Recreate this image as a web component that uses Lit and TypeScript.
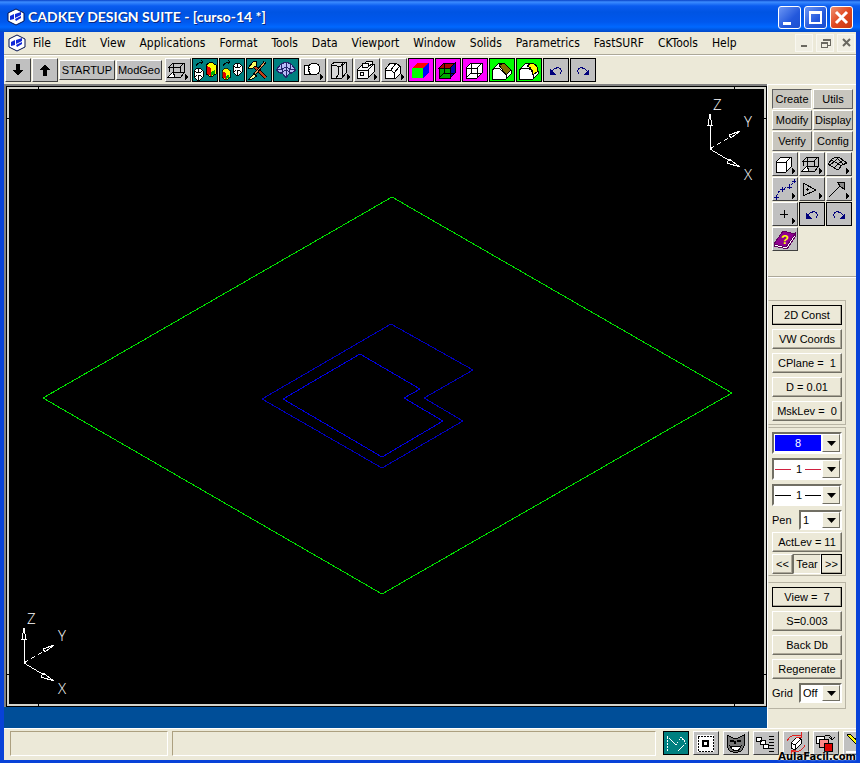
import { LitElement, html, svg, css, TemplateResult } from "lit";
import { customElement, property } from "lit/decorators.js";
import { classMap } from "lit/directives/class-map.js";

const more = svg`<path d="M21 16l3 3l-3 3z" fill="#000" stroke="none"/>`;
const undoArrow = svg`<g stroke="#00007c" fill="none"><path d="M10 13Q13 9 17 10Q21 12 18 16"/><path d="M8 11v6h6z" fill="#00007c" stroke="none"/></g>`;
const redoArrow = svg`<g stroke="#00007c" fill="none"><path d="M18 13Q15 9 11 10Q7 12 10 16"/><path d="M20 11v6h-6z" fill="#00007c" stroke="none"/></g>`;
const wheel = (x: number, y: number) => svg`<g transform="translate(${x} ${y})"><path d="M3 0h3l3 3v6l-3 3h-3l-3-3v-6z" fill="#fff"/><path d="M4 0v12M1 3l7 6M8 3l-7 6" stroke="#000"/><path d="M3 5h3v2h-3z" fill="#fff" stroke="none"/></g>`;
const colorBox = (x: number, y: number, k: number) => svg`<g transform="translate(${x} ${y}) scale(${k})"><path d="M0 3l5-3l5 3v9l-5 3l-5-3z" fill="#ff0" stroke="#000"/><path d="M1 4l4 2v8l-4-2z" fill="#e00000" stroke="none"/><path d="M5 6l4-2v4l-4 2z" fill="#ff0" stroke="none"/><path d="M5 10l4-2v4l-4 2z" fill="#00b000" stroke="none"/></g>`;
const outlineCube = svg`<path d="M5 10l5-5h10v10l-5 5h-10z" fill="#fff"/><path d="M5 10h10v10M15 10l5-5" fill="none"/>`;

const icons: Record<string, TemplateResult> = {
  down: svg`<path d="M12 6h4v6h3l-5 6l-5-6h3z" fill="#000" stroke="none"/>`,
  up: svg`<path d="M12 18h4v-6h3l-5-6l-5 6h3z" fill="#000" stroke="none"/>`,
  wire: svg`<path d="M5 9l4-4h11l-4 4zM5 9v5M9 5v9h11M16 9v5M20 5v10" fill="none"/><path d="M4 19l5-5l2 5z" fill="#fff"/><path d="M11 19h6l3-4" fill="none"/>${more}`,
  toBox: svg`${wheel(3, 10)}${colorBox(15, 4, 1)}<path d="M5 8q2-4 7-4M10 2l2 2l-2 2" fill="none"/>`,
  toWheel: svg`${colorBox(4, 10, 0.8)}${wheel(15, 5)}<path d="M5 8q2-4 7-4M10 2l2 2l-2 2" fill="none"/>`,
  tools: svg`<path d="M9 8l12 12" stroke="#000" stroke-width="4"/><path d="M9 8l12 12" stroke="#c04018" stroke-width="2"/><path d="M20 4l-11 13" stroke="#000" stroke-width="3"/><path d="M20 4l-11 13" stroke="#e0a060"/><path d="M3 10l6-7l3 1l-1 4l-5 3z" fill="#ffff60"/><path d="M4 21l5-5l3 2l-5 3z" fill="#ffffa0"/>`,
  mesh: svg`<path d="M4 12l5-6l5-2l5 2l5 6l-4 3l-3 1l-3 4l-3-4l-3-1z" fill="#b8b8f4" stroke="#24246c"/><path d="M14 4v16M9 6l2 10M19 6l-2 10M4 12l6-1l4-2l4 2l6 1M8 15l6-3l6 3" fill="none" stroke="#24246c"/>`,
  circle: svg`<path d="M5 7h12v9h-12z" fill="#fff"/><circle cx="15" cy="11" r="6" fill="#fff"/><path d="M10 7v9h7" fill="none" stroke-dasharray="1 1"/>${more}`,
  fold: svg`<path d="M5 7l4-3h11v11l-4 5h-11z" fill="#d8d8d8"/><path d="M5 7h5l2 2v8l-2 3M12 9q4 0 5-5M16 8v12M16 8l4-4" fill="none"/>${more}`,
  machine: svg`<path d="M4 12l5-5v-2h3l2-2h5v3h2v8l-6 6h-11z" fill="#f4f4f4"/><path d="M4 12h11v8M15 12l6-6M9 7v2h6l4-3M9 5h6v4" fill="none"/><circle cx="9" cy="16" r="2" fill="none"/>${more}`,
  chamfer: svg`<path d="M5 12l5-7h6l4 3v8l-4 4h-11z" fill="#fff"/><path d="M5 12h6l5-7M11 12l3 3v5M14 15l6-7" fill="none"/>${more}`,
  shaded: svg`<path d="M5 10l5-5h12l-6 5z" fill="#f00" stroke="none"/><path d="M5 10h11v10h-11z" fill="#0f0" stroke="none"/><path d="M16 10l6-5v10l-6 5z" fill="#00f" stroke="none"/>`,
  shadedWire: svg`<path d="M5 10l5-5h11l-5 5z" fill="#b00000"/><path d="M5 10h11v10h-11z" fill="#00a800"/><path d="M16 10l5-5v10l-5 5z" fill="#0000b0"/><path d="M10 5v10h11M10 15l-5 5" fill="none"/>`,
  whiteWire: svg`<path d="M5 10l5-5h11v10l-5 5h-11z" fill="#fff"/><path d="M5 10h11v10M16 10l5-5M10 5v10h11M10 15l-5 5" fill="none"/>`,
  chamferFace: svg`<path d="M4 12l7-7h5l7 7v4l-5 5h-14z" fill="#fff"/><path d="M11 7l5-2l7 7l-5 5z" fill="#807000"/><path d="M4 12l3-2h4l7 7v4" fill="none"/>`,
  filletFace: svg`<path d="M4 12l7-7h6q6 2 6 8v3l-5 5h-14z" fill="#fff"/><path d="M12 8l5-3q6 2 6 8l-5 4q0-7-6-9z" fill="#ff0"/><path d="M4 12l3-2h4q7 1 7 7v4" fill="none"/>`,
  undo: undoArrow,
  redo: redoArrow,
  cube: svg`${outlineCube}${more}`,
  surface: svg`<path d="M3 12l4-5l4-2h3l8 6l-5 2l-3 4h-3zM6 8l4 2l7 4M11 5l7 7M5 13l5-4l4-4M9 16l4-4l5-4" fill="none"/>${more}`,
  spline: svg`<g stroke="#000080" fill="none"><path d="M5 20Q8 13 11 12T18 10Q20 9 23 4" stroke-dasharray="3 1"/><path d="M3 20h5M5 18v5M9 12h5M11 10v5M16 10h5M18 7v5M21 4h4M23 2v4"/></g>${more}`,
  play: svg`<path d="M5 6v13l13-6z" fill="none"/><path d="M9 11v3M8 12h3"/>${more}`,
  leader: svg`<path d="M4 20l13-13M12 5h7v7z" fill="none"/><path d="M12 5h7v7l-3-2z" fill="#888"/>${more}`,
  plus: svg`<path d="M13 8v8M9 12h8" fill="none"/>${more}`,
  help: svg`<path d="M3 17l9-13l12 3l-9 13z" fill="#900090" stroke="#600060"/><path d="M3 17l12 3l9-13v3l-8 12l-13-3z" fill="#fff" stroke="#600060"/><text x="10" y="17" class="mark" fill="#ff0" stroke="none">?</text>`,
  polyline: svg`<path d="M5 20v-15l9 9l5-8l5 6l-8 8" fill="none" stroke="#fff" stroke-dasharray="2 1"/>`,
  select: svg`<path d="M6 5h15v15h-15z" fill="#fff" stroke="#fff" stroke-width="2"/><path d="M6 5h15v15h-15z" fill="none" stroke-dasharray="2 1"/><path d="M11 10h5v5h-5z" fill="#fff" stroke-width="2"/>`,
  mask: svg`<path d="M5 4l6 3h5l6-3v11q-2 6-6 6h-5q-4 0-6-6z" fill="#777"/><path d="M8 15q6 2 11 0q-2 5-5 5t-6-5z" fill="#fff"/><path d="M8 10h4M15 10h4M13 10v3" stroke-width="2"/>`,
  layers: svg`<path d="M4 6h5v4h-5zM8 9h5v4h-5zM11 13h5v4h-5z" fill="#fff"/><path d="M17 5h5M17 8h5M17 11h5M17 14h5M17 17h5M17 20h5"/>`,
  rotate: svg`<path d="M9 12l6-6l4 2v5l-6 6l-4-2z" fill="#fff"/><path d="M9 12l4 2l6-6M13 14v5" fill="none"/><path d="M5 10Q9 2 19 5M23 14Q19 23 9 20M19 1v5h-5M9 23v-4h5" fill="none" stroke="#e02020"/>`,
  copy: svg`<path d="M4 5h8v7h-8z" fill="#fff"/><path d="M7 8h9v8h-9z" fill="#f88"/><path d="M12 12h8v8h-8z" fill="#e00000"/><path d="M13 5q5-3 7 3M17 6l3 3l3-3" fill="none"/>`,
  pencil: svg`<path d="M5 4l3-1l16 15l-3 2z" fill="#ff0"/><path d="M4 21h14" stroke="#fff" stroke-width="2"/>`,
};

const logo = svg`<path d="M9 1l8 4v8l-8 4l-8-4v-8z" fill="#fff" stroke="#001050"/><path d="M3 8l4-2v5l-4 1zM8 6l6-2v3l-6 3zM8 11l6-3v2l-5 3z" fill="#1028d8"/>`;

@customElement("tool-icon")
export class ToolIcon extends LitElement {
  static styles = css`
    :host { display: block; width: 24px; height: 22px; }
    svg { display: block; width: 24px; height: 22px; shape-rendering: crispEdges; }
    .mark { font: bold 13px "Liberation Sans", sans-serif; }
  `;
  @property() name = "";
  render() {
    return html`<svg viewBox="2 1 24 22" stroke="#000" stroke-width="1" aria-hidden="true">${icons[this.name]}</svg>`;
  }
}

const menus = ["File", "Edit", "View", "Applications", "Format", "Tools", "Data", "Viewport", "Window", "Solids", "Parametrics", "FastSURF", "CKTools", "Help"];

const tools: [string, string][] = [
  ["wire", ""], ["toBox", "teal"], ["toWheel", "teal"], ["tools", "teal"], ["mesh", "teal"],
  ["circle", ""], ["fold", ""], ["machine", ""], ["chamfer", ""],
  ["shaded", "pink"], ["shadedWire", "pink"], ["whiteWire", "pink"],
  ["chamferFace", "lime"], ["filletFace", "lime"], ["undo", "flat"], ["redo", "flat"],
];
const palette: [string, string][] = [
  ["cube", ""], ["wire", ""], ["surface", ""], ["spline", ""], ["play", ""], ["leader", ""],
  ["plus", ""], ["undo", "flat"], ["redo", "flat"], ["help", ""],
];
const statusTools: [string, string][] = [
  ["polyline", "teal"], ["select", ""], ["mask", ""], ["layers", ""], ["rotate", ""], ["copy", ""], ["pencil", ""],
];

@customElement("app-root")
export class AppRoot extends LitElement {
  static styles = css`
    :host {
      display: flex; flex-direction: column; min-height: 100vh; box-sizing: border-box;
      background: #ece9d8; color: #000; position: relative;
      border: solid #0842d8; border-width: 0 4px 4px;
      font: 11px/13px "Liberation Sans", Arial, sans-serif;
    }
    * { box-sizing: border-box; }
    button, select { font: inherit; color: inherit; padding: 0; margin: 0; border-radius: 0; }
    .title {
      display: flex; align-items: center; gap: 3px; height: 32px; margin: 0 -4px; padding: 2px 7px 0;
      background: linear-gradient(#0842c8 0, #3c8cff 2px, #0a5cf0 6px, #0054e3 12px, #0058ee 22px, #0068ff 27px, #0048c8 32px);
      color: #fff;
    }
    h1 { flex: 1; margin: 0; font: bold 14px/20px Lato, "Open Sans", sans-serif; text-shadow: 1px 1px #0a2a80; white-space: nowrap; }
    .logo { width: 18px; height: 18px; flex: none; }
    .win { width: 23px; height: 23px; border: 1px solid #fff; border-radius: 3px; background: linear-gradient(135deg, #6c96f4, #2358dc 60%, #1c50d0); }
    .win.close { background: linear-gradient(135deg, #f09070, #e04820 50%, #c83810); }
    .win svg, .mdi svg { display: block; width: 100%; height: 100%; }
    .menubar { display: flex; align-items: center; height: 23px; padding: 0 1px 0 4px; border-bottom: 1px solid #aca899; }
    nav { flex: 1; display: flex; gap: 14px; padding-left: 7px; }
    nav button { border: 0; background: none; font: 12px/18px "DejaVu Sans Condensed", "Noto Sans", sans-serif; white-space: nowrap; }
    .mdis { display: flex; gap: 3px; }
    .mdi { width: 18px; height: 18px; border: 1px solid #f8f7f0; background: #f0eee2; }
    .toolbar { display: flex; align-items: center; gap: 1px; height: 29px; padding: 0 1px; border-top: 1px solid #fff; }
    .tool { width: 26px; height: 24px; flex: none; background: #c0c0c0; border: 1px solid; border-color: #fff #404040 #404040 #fff; }
    .teal, .pink, .lime, .flat { border-color: #000; }
    .teal { background: #008080; }
    .pink { background: #f0f; }
    .lime { background: #0f0; }
    .text-tool { width: 56px; height: 20px; background: #c0c0c0; border: 1px solid; border-color: #fff #404040 #404040 #fff; }
    .text-tool.lead { width: 46px; margin-right: 2px; }
    .work { flex: 1; display: flex; }
    .stage { flex: 1; min-width: 0; display: flex; flex-direction: column; background: #004e98; padding-bottom: 21px; }
    .frame { flex: 1; display: flex; border: solid #808080; border-width: 2px 0 0 2px; }
    .bevel { flex: 1; display: flex; border: 1px solid #000; }
    .paper { flex: 1; display: flex; background: #000; border: 2px solid #d4d4cc; }
    .paper svg { flex: 1; min-width: 0; display: block; overflow: visible; }
    .axis { font: 300 15px "Open Sans", "Liberation Sans", sans-serif; fill: #fff; }
    .side { flex: none; width: 89px; padding: 4px 0 0 4px; border-top: 1px solid #fff; border-left: 1px solid #fff; }
    .tabs { display: grid; grid-template-columns: 40px 40px; gap: 1px; }
    .tab { height: 20px; background: #c8c6be; border: 1px solid; border-color: #fff #606060 #606060 #fff; }
    .tab.on { border-color: #606060 #fff #fff #606060; }
    .palette { display: grid; grid-template-columns: repeat(3, 26px); gap: 1px; margin-top: 1px; padding-bottom: 25px; }
    .rule { border: 0; border-top: 1px solid #aca899; border-bottom: 1px solid #fff; margin: 0 0 0 -4px; }
    .group { display: flex; flex-direction: column; gap: 4px; width: 78px; margin: 0 0 2px -4px; padding: 4px 3px 3px; border: 1px solid #b8b4a4; border-left-color: #ece9d8; }
    .group.first { margin-top: 22px; }
    .group.attrs { gap: 2px; padding-bottom: 1px; }
    .group.view { margin-top: 6px; padding-bottom: 5px; }
    .cmd { height: 20px; background: #ece9d8; border: 1px solid; border-color: #fff #716f64 #716f64 #fff; box-shadow: inset -1px -1px #aca899; white-space: pre; }
    .cmd.strong { border-color: #000; }
    .row { display: flex; align-items: center; }
    .row label { flex: 1; }
    .trio { display: grid; grid-template-columns: 21px 1fr 21px; }
    .cmd.sunk { border-color: #716f64 #fff #fff #716f64; box-shadow: none; }
    .combo { position: relative; display: flex; height: 22px; margin-bottom: 2px; border: 2px solid; border-color: #716f64 #fff #fff #716f64; background: #fff; }
    .combo.small { width: 43px; height: 20px; margin: 0; }
    select { appearance: none; border: 0; flex: 1; min-width: 0; background: none; padding: 0 18px 0 2px; outline: 0; }
    .color select { background: #00f; color: #fff; background-clip: content-box; padding: 1px 19px 1px 1px; text-align-last: center; }
    .line select { --ink: #000; text-align-last: center; background: linear-gradient(var(--ink), var(--ink)) 1px 9px / 16px 1px no-repeat, linear-gradient(var(--ink), var(--ink)) 31px 9px / 16px 1px no-repeat; }
    .line.red select { --ink: #d02040; }
    .drop { position: absolute; right: 0; top: 0; bottom: 0; width: 18px; background: #ece9d8; border: 1px solid; border-color: #fff #716f64 #716f64 #fff; pointer-events: none; display: grid; place-items: center; }
    .drop svg { width: 9px; height: 5px; }
    .status { display: flex; align-items: center; gap: 4px; height: 32px; padding: 0 0 3px 6px; border-top: 1px solid #fff; }
    .pane { height: 25px; border: 1px solid; border-color: #aca080 #fff #fff #aca080; }
    .pane.hint { flex: 0 1 158px; }
    .pane.prompt { flex: 1; }
    .tray { display: flex; gap: 4px; width: 193px; margin-left: 3px; overflow: hidden; }
    .credit { position: absolute; right: 0; bottom: -3px; font: bold 10px/12px "DejaVu Sans", sans-serif; text-shadow: 0 0 2px #fff; }
  `;

  private tool([name, tone]: [string, string]) {
    return html`<button class=${classMap({ tool: true, [tone || "plain"]: true })} aria-label=${name}><tool-icon name=${name}></tool-icon></button>`;
  }

  private combo(id: string, label: string, value: string, kind: string) {
    return html`<div class="combo ${kind}"><select id=${id} aria-label=${label}><option>${value}</option></select>
      <span class="drop"><svg viewBox="0 0 9 5"><path d="M0 0h9l-4.500 5z"/></svg></span></div>`;
  }

  private axes(x: number, y: number) {
    return svg`<g transform="translate(${x} ${y})" fill="none" stroke="#fff" shape-rendering="crispEdges">
      <path d="M0 0V-24M0 0L20 12"/><path d="M0 0L20 -12" stroke-dasharray="5 3"/>
      <path d="M0 -35l-2 11h4zM30 -18l-11 4l2 3zM30 18l-11 -8l-2 4z"/>
      <g class="axis" stroke="none"><text x="3" y="-39">Z</text><text x="34" y="-22">Y</text><text x="34" y="31">X</text></g></g>`;
  }

  render() {
    return html`
      <header class="title">
        <svg class="logo" viewBox="0 0 18 18">${logo}</svg>
        <h1>CADKEY DESIGN SUITE - [curso-14 *]</h1>
        <button class="win" aria-label="Minimize"><svg viewBox="0 0 21 21"><path d="M4 15h8v3H4z" fill="#fff"/></svg></button>
        <button class="win" aria-label="Maximize"><svg viewBox="0 0 21 21"><path d="M5 5h11v11H5zM5 6h11" fill="none" stroke="#fff" stroke-width="2"/></svg></button>
        <button class="win close" aria-label="Close"><svg viewBox="0 0 21 21"><path d="M5 5l11 11M16 5L5 16" stroke="#fff" stroke-width="3"/></svg></button>
      </header>
      <div class="menubar">
        <svg class="logo" viewBox="0 0 18 18">${logo}</svg>
        <nav>${menus.map((m) => html`<button>${m}</button>`)}</nav>
        <div class="mdis">
          <button class="mdi" aria-label="Minimize drawing"><svg viewBox="0 0 16 16"><path d="M5 10h6v2H5z" fill="#6a6860"/></svg></button>
          <button class="mdi" aria-label="Restore drawing"><svg viewBox="0 0 16 16" shape-rendering="crispEdges"><path d="M4 7h6v5H4zM4 8h6M6 6V4h7v6h-2M6 5h7" fill="none" stroke="#6a6860"/></svg></button>
          <button class="mdi" aria-label="Close drawing"><svg viewBox="0 0 16 16"><path d="M5 4l7 7M12 4l-7 7" stroke="#6a6860" stroke-width="2"/></svg></button>
        </div>
      </div>
      <div class="toolbar" role="toolbar">
        ${this.tool(["down", ""])}${this.tool(["up", ""])}
        <button class="text-tool">STARTUP</button>
        <button class="text-tool lead">ModGeo</button>
        ${tools.map((t) => this.tool(t))}
      </div>
      <main class="work">
        <section class="stage">
          <div class="frame"><div class="bevel"><div class="paper">
            <svg viewBox="9 89 755 615" role="img" aria-label="Isometric drawing">
              <g fill="none" shape-rendering="crispEdges">
                <path d="M392 197L732 393L382 594L43 398Z" stroke="#00e000"/>
                <path d="M391 324L473 370L424 398L463 421L382 468L262 399Z" stroke="#0000c0"/>
                <path d="M360 354L420 389L404 398L443 421L382 457L283 399Z" stroke="#0000e0"/>
                <path d="M38 87v2M734 87v2M38 704v2M734 704v2M7 118h2M764 118h2M7 674h2M764 674h2" stroke="#000"/>
              </g>
              ${this.axes(710, 149)}${this.axes(24, 663)}
            </svg>
          </div></div></div>
        </section>
        <aside class="side">
          <div class="tabs">${["Create", "Utils", "Modify", "Display", "Verify", "Config"].map((t, i) => html`<button class=${classMap({ tab: true, on: i === 0 })}>${t}</button>`)}</div>
          <div class="palette">${palette.map((t) => this.tool(t))}</div>
          <hr class="rule" />
          <div class="group first">
            <button class="cmd strong">2D Const</button>
            <button class="cmd">VW Coords</button>
            <button class="cmd">CPlane =  1</button>
            <button class="cmd">D = 0.01</button>
            <button class="cmd">MskLev =  0</button>
          </div>
          <div class="group attrs">
            ${this.combo("color", "Color", "8", "color")}
            ${this.combo("linetype", "Line type", "1", "line red")}
            ${this.combo("width", "Line width", "1", "line")}
            <div class="row"><label for="pen">Pen</label>${this.combo("pen", "Pen", "1", "small")}</div>
            <button class="cmd">ActLev = 11</button>
            <div class="trio"><button class="cmd">&lt;&lt;</button><button class="cmd sunk">Tear</button><button class="cmd strong">&gt;&gt;</button></div>
          </div>
          <div class="group view">
            <button class="cmd strong">View =  7</button>
            <button class="cmd">S=0.003</button>
            <button class="cmd">Back Db</button>
            <button class="cmd">Regenerate</button>
            <div class="row"><label for="grid">Grid</label>${this.combo("grid", "Grid", "Off", "small")}</div>
          </div>
        </aside>
      </main>
      <footer class="status">
        <div class="pane hint"></div><div class="pane prompt"></div>
        <div class="tray">${statusTools.map((t) => this.tool(t))}</div>
        <span class="credit">AulaFacil.com</span>
      </footer>
    `;
  }
}
